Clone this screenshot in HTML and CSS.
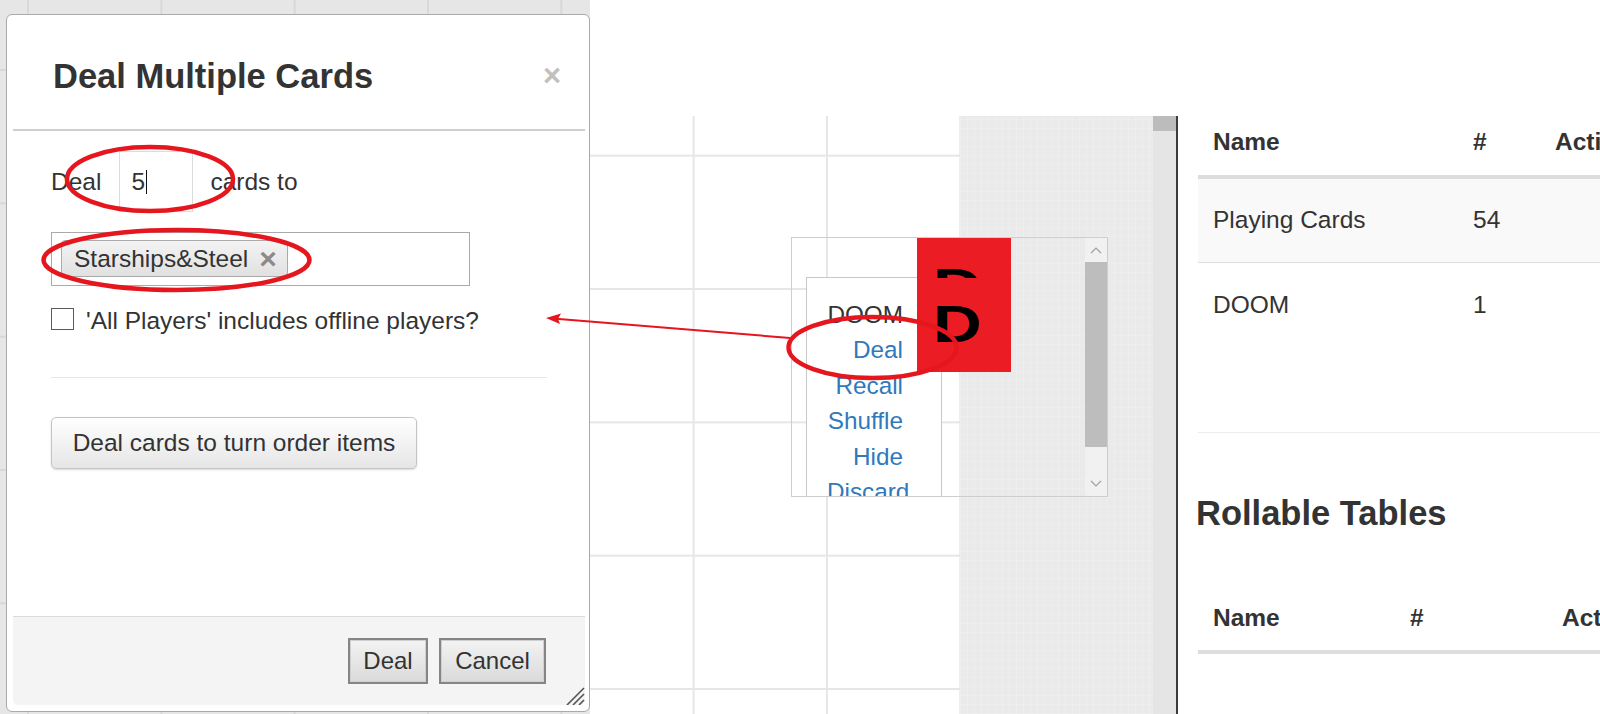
FILE: index.html
```html
<!DOCTYPE html>
<html lang="en">
<head>
<meta charset="utf-8">
<title>Deal Multiple Cards</title>
<link rel="stylesheet" href="styles.css">
</head>
<body>
<div class="app">
  <div class="topbar"></div>
  <div class="main">
    <div class="grid"></div>
    <div class="felt"></div>
    <div class="vscroll"><div class="vthumb"></div></div>
    <div class="divider"></div>
    <section class="panel">
      <table class="tbl tbl-decks">
        <thead>
          <tr><th class="col-name">Name</th><th class="col-num">#</th><th>Actions</th></tr>
        </thead>
        <tbody>
          <tr class="row-odd"><td>Playing Cards</td><td>54</td><td></td></tr>
          <tr class="row-tall"><td>DOOM</td><td>1</td><td></td></tr>
        </tbody>
      </table>
      <h2 class="panel-title">Rollable Tables</h2>
      <table class="tbl tbl-rollable">
        <thead>
          <tr><th class="col-name">Name</th><th class="col-num">#</th><th>Actions</th></tr>
        </thead>
      </table>
    </section>

    <div class="deckwin">
      <div class="deckwin-view">
        <div class="decklist">
          <div class="deck-name">DOOM</div>
          <a class="deck-link">Deal</a>
          <a class="deck-link">Recall</a>
          <a class="deck-link">Shuffle</a>
          <a class="deck-link">Hide</a>
          <a class="deck-link">Discard</a>
        </div>
      </div>
      <div class="deckwin-scroll">
        <div class="sb-btn">
          <svg width="12" height="8" viewBox="0 0 12 8"><path d="M1 7 L6 2 L11 7" fill="none" stroke="#a0a0a0" stroke-width="1.2"/></svg>
        </div>
        <div class="sb-thumb"></div>
        <div class="sb-gap"></div>
        <div class="sb-btn">
          <svg width="12" height="8" viewBox="0 0 12 8"><path d="M1 1 L6 6 L11 1" fill="none" stroke="#a0a0a0" stroke-width="1.2"/></svg>
        </div>
      </div>
    </div>

    <div class="card">
      <div class="card-frag"><div class="card-letter">D</div></div>
      <div class="card-big"><div class="card-letter">D</div></div>
    </div>
  </div>

  <div class="backdrop">
    <div class="dialog">
      <div class="dlg-header">
        <span class="dlg-title">Deal Multiple Cards</span>
        <span class="dlg-close">×</span>
      </div>
      <div class="dlg-body">
        <div class="deal-row">
          <span>Deal</span>
          <div class="num-input"><span>5</span><span class="caret"></span></div>
          <span>cards to</span>
        </div>
        <div class="tag-box">
          <span class="tag">Starships&amp;Steel<span class="tag-x">×</span></span>
        </div>
        <div class="check-row">
          <span class="checkbox"></span>
          <span class="check-label">'All Players' includes offline players?</span>
        </div>
        <div class="sep"></div>
        <button class="btn-turn">Deal cards to turn order items</button>
      </div>
      <div class="dlg-footer">
        <button class="btn-foot btn-deal">Deal</button>
        <button class="btn-foot btn-cancel">Cancel</button>
      </div>
      <svg class="grip" width="22" height="20" viewBox="0 0 22 20">
        <path d="M21 3 L4 20 M21 9 L10 20 M21 15 L16 20" stroke="#555" stroke-width="1.6" fill="none"/>
      </svg>
    </div>
  </div>

  <svg class="marks" width="1600" height="714" viewBox="0 0 1600 714">
    <g fill="none" stroke="#e5161d" stroke-width="4.5">
      <ellipse cx="150" cy="179" rx="83" ry="32"/>
      <ellipse cx="176.5" cy="260" rx="133" ry="30"/>
      <ellipse cx="872.5" cy="347.5" rx="84" ry="30.5"/>
    </g>
    <line x1="556" y1="318.8" x2="790" y2="338" stroke="#e5161d" stroke-width="2"/>
    <polygon points="546,318 561,313.5 558,318.7 560,324" fill="#e5161d"/>
  </svg>
</div>
</body>
</html>
```

FILE: styles.css
```css
* { box-sizing: border-box; }

html, body {
  margin: 0;
  padding: 0;
}

body {
  width: 1600px;
  height: 714px;
  overflow: hidden;
  background: #fff;
  font-family: "Liberation Sans", Arial, sans-serif;
  color: #333;
}

.app {
  position: relative;
  width: 1600px;
  height: 714px;
  display: flex;
  flex-direction: column;
}

.topbar {
  height: 116px;
  flex: none;
  background: #fff;
}

.main {
  position: relative;
  flex: 1;
  display: flex;
  min-height: 0;
}

.grid {
  width: 960px;
  flex: none;
  background-color: #fff;
  background-image:
    linear-gradient(to right, #e6e6e6 2px, transparent 2px),
    linear-gradient(to bottom, #e6e6e6 2px, transparent 2px);
  background-size: 133.33px 133.33px;
  background-position: 26px 38.7px;
}

.felt {
  width: 193px;
  flex: none;
  background-color: #eaeaea;
  background-image:
    repeating-linear-gradient(90deg, rgba(255,255,255,0.18) 0 1px, transparent 1px 7px),
    repeating-linear-gradient(0deg, rgba(255,255,255,0.14) 0 1px, transparent 1px 9px);
}

.vscroll {
  width: 23px;
  flex: none;
  background: #e5e5e5;
}

.vthumb {
  height: 15px;
  background: #bcbcbc;
}

.divider {
  width: 2px;
  flex: none;
  background: #3c3c3c;
}

.panel {
  width: 422px;
  flex: none;
  overflow: hidden;
  padding-left: 20px;
  background: #fff;
}

.tbl {
  border-collapse: collapse;
  table-layout: fixed;
  width: 560px;
  font-size: 24.5px;
  line-height: 28px;
  color: #333;
  white-space: nowrap;
}

.tbl th {
  text-align: left;
  font-weight: bold;
  padding: 12px 15px 19px;
  border-bottom: 4px solid #ddd;
}

.tbl td {
  padding: 27px 15px 28px;
  border-bottom: 1px solid #ddd;
  vertical-align: top;
}

.tbl-decks .col-name { width: 260px; }
.tbl-decks .col-num { width: 82px; }

.row-odd td { background: #f9f9f9; }

.row-tall td {
  padding-top: 28px;
  padding-bottom: 113px;
  border-bottom-color: #ececec;
}

.panel-title {
  margin: 61px 0 59px -2px;
  font-size: 34.5px;
  line-height: 39px;
  font-weight: bold;
  color: #333;
}

.tbl-rollable .col-name { width: 197px; }
.tbl-rollable .col-num { width: 152px; }
.tbl-rollable th { padding-bottom: 18px; }

/* deck window on the tabletop */
.deckwin {
  position: absolute;
  left: 791px;
  top: 121px;
  width: 317px;
  height: 260px;
  border: 1px solid #cdcdcd;
  display: flex;
  overflow: hidden;
}

.deckwin-view {
  flex: 1;
  overflow: hidden;
}

.decklist {
  margin: 39px 0 0 14px;
  width: 136px;
  height: 260px;
  border: 1px solid #c8c8c8;
  background: #fff;
  padding: 19px 38px 0 20px;
  text-align: right;
  font-size: 24.3px;
  line-height: 35.4px;
  white-space: nowrap;
}

.deck-name {
  color: #333;
}

.deck-link {
  display: block;
  color: #3179bb;
}

.deckwin-scroll {
  width: 22px;
  flex: none;
  background: #f1f1f1;
  display: flex;
  flex-direction: column;
}

.sb-btn {
  height: 24px;
  flex: none;
  display: flex;
  align-items: center;
  justify-content: center;
}

.sb-thumb {
  height: 185px;
  flex: none;
  background: #bdbdbd;
}

.sb-gap { flex: 1; }

.card {
  position: absolute;
  left: 917px;
  top: 122px;
  width: 94px;
  height: 134px;
  background: #ec1c24;
  padding: 30px 0 0 16px;
  overflow: hidden;
  font-weight: bold;
  font-size: 52px;
  line-height: 52px;
  color: #000;
}

.card-letter {
  width: 60px;
  transform: scaleX(1.3);
  transform-origin: left center;
}

.card-frag {
  height: 10px;
  overflow: hidden;
}

.card-frag .card-letter {
  margin-top: -7px;
}

.card-big {
  margin-top: 20px;
  height: 52px;
}

/* dialog */
.backdrop {
  position: absolute;
  left: 0;
  top: 0;
  width: 590px;
  height: 714px;
  padding: 14px 0 0 6px;
  background-color: #e6e6e6;
  background-image:
    linear-gradient(to right, #d8d8d8 2px, transparent 2px),
    linear-gradient(to bottom, #d8d8d8 2px, transparent 2px);
  background-size: 133.33px 133.33px;
  background-position: 27px 69px;
}

.dialog {
  position: relative;
  width: 584px;
  height: 698px;
  border: 1px solid #aaa;
  border-radius: 6px;
  background: #fff;
  padding: 0 4px 6px 6px;
  display: flex;
  flex-direction: column;
  font-size: 24.5px;
  color: #333;
}

.dlg-header {
  display: flex;
  align-items: center;
  justify-content: space-between;
  padding: 41px 24px 33px 40px;
  border-bottom: 2px solid #cfcfcf;
}

.dlg-title {
  font-size: 34.5px;
  line-height: 40px;
  font-weight: bold;
  color: #333;
}

.dlg-close {
  font-size: 31px;
  line-height: 40px;
  font-weight: bold;
  color: #c0c0c0;
}

.dlg-body {
  flex: 1;
  display: flex;
  flex-direction: column;
  align-items: flex-start;
  padding: 0 38px;
}

.deal-row {
  margin-top: 20px;
  display: flex;
  align-items: center;
  height: 61px;
}

.num-input {
  width: 74px;
  height: 61px;
  margin: 0 17px 0 18px;
  border: 1px solid #dcdcdc;
  padding-left: 11px;
  display: flex;
  align-items: center;
  color: #333;
}

.caret {
  width: 1px;
  height: 24px;
  margin-left: 1px;
  background: #111;
}

.tag-box {
  margin-top: 20px;
  width: 419px;
  height: 54px;
  border: 1px solid #aaa;
  padding: 7px 0 0 9px;
}

.tag {
  display: inline-flex;
  align-items: center;
  height: 37px;
  padding: 0 10px 0 12px;
  border: 1px solid #aaa;
  border-radius: 4px;
  background: linear-gradient(#f3f3f3, #e1e1e1);
  color: #333;
  line-height: 35px;
}

.tag-x {
  margin-left: 11px;
  font-weight: bold;
  color: #8a8a8a;
  font-size: 30px;
}

.check-row {
  margin-top: 22px;
  display: flex;
  align-items: center;
  gap: 12px;
  height: 22px;
}

.check-label {
  position: relative;
  top: 2px;
}

.checkbox {
  width: 23px;
  height: 22px;
  border: 1px solid #5a5a5a;
  background: #fff;
}

.sep {
  align-self: stretch;
  margin-top: 47px;
  border-top: 1px solid #e6e6e6;
}

.btn-turn {
  margin-top: 39px;
  width: 366px;
  height: 52px;
  border: 1px solid #c4c4c4;
  border-radius: 5px;
  background: linear-gradient(#ffffff, #e6e6e6);
  box-shadow: 0 1px 2px rgba(0,0,0,0.15);
  font-family: "Liberation Sans", Arial, sans-serif;
  font-size: 24.5px;
  color: #333;
  padding: 0;
}

.dlg-footer {
  height: 89px;
  border-top: 1px solid #dcdcdc;
  background: #f4f4f4;
  border-radius: 0 0 5px 5px;
  display: flex;
  justify-content: flex-end;
  align-items: flex-start;
  gap: 11px;
  padding: 21px 39px 0 0;
}

.btn-foot {
  height: 46px;
  border: 2px solid #858585;
  box-shadow: inset 0 0 0 1px #d0d0d0;
  background: linear-gradient(#f3f3f3, #dadada);
  font-family: "Liberation Sans", Arial, sans-serif;
  font-size: 24px;
  color: #333;
  padding: 0;
}

.btn-deal { width: 80px; }
.btn-cancel { width: 107px; }

.grip {
  position: absolute;
  right: 4px;
  bottom: 6px;
}

.marks {
  position: absolute;
  left: 0;
  top: 0;
  pointer-events: none;
}
```
